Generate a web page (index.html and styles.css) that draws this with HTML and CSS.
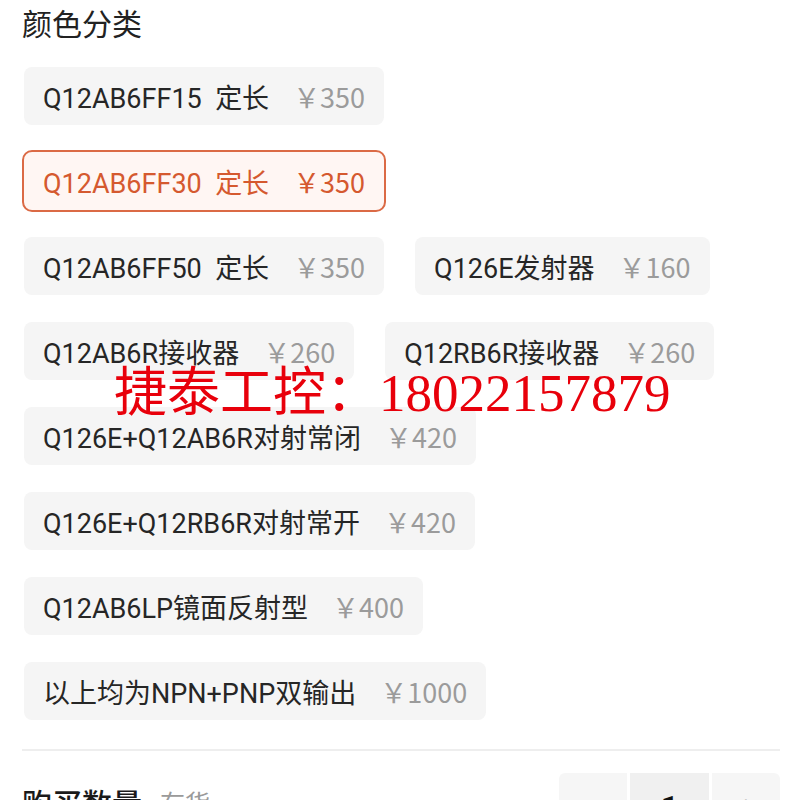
FILE: index.html
```html
<!DOCTYPE html>
<html lang="zh">
<head>
<meta charset="utf-8">
<link rel="stylesheet" href="styles.css">
</head>
<body>
<div class="page">
  <h2 class="title">颜色分类</h2>
  <div class="options">
    <div class="row">
      <div class="opt"><span class="name">Q12AB6FF15&nbsp;&nbsp;定长</span><span class="price">￥350</span></div>
    </div>
    <div class="row">
      <div class="opt selected"><span class="name">Q12AB6FF30&nbsp;&nbsp;定长</span><span class="price">￥350</span></div>
    </div>
    <div class="row">
      <div class="opt"><span class="name">Q12AB6FF50&nbsp;&nbsp;定长</span><span class="price">￥350</span></div>
      <div class="opt"><span class="name">Q126E发射器</span><span class="price">￥160</span></div>
    </div>
    <div class="row">
      <div class="opt"><span class="name">Q12AB6R接收器</span><span class="price">￥260</span></div>
      <div class="opt"><span class="name">Q12RB6R接收器</span><span class="price">￥260</span></div>
    </div>
    <div class="row">
      <div class="opt"><span class="name">Q126E+Q12AB6R对射常闭</span><span class="price">￥420</span></div>
    </div>
    <div class="row">
      <div class="opt"><span class="name">Q126E+Q12RB6R对射常开</span><span class="price">￥420</span></div>
    </div>
    <div class="row">
      <div class="opt"><span class="name">Q12AB6LP镜面反射型</span><span class="price">￥400</span></div>
    </div>
    <div class="row">
      <div class="opt"><span class="name">以上均为NPN+PNP双输出</span><span class="price">￥1000</span></div>
    </div>
  </div>
  <div class="divider"></div>
  <div class="qty-row">
    <div class="qty-label"><span class="label-text">购买数量</span><span class="stock">有货</span></div>
    <div class="stepper">
      <div class="step minus">−</div>
      <div class="step num">1</div>
      <div class="step plus">+</div>
    </div>
  </div>
  <div class="watermark">捷泰工控：18022157879</div>
</div>
</body>
</html>
```
FILE: styles.css
```css
html, body {
  margin: 0;
  padding: 0;
  background: #fff;
}
body {
  font-family: Roboto, "Noto Sans CJK SC", sans-serif;
  color: #222;
  overflow: hidden;
}
.page {
  position: relative;
  width: 800px;
  height: 800px;
  padding: 0 20px 0 22px;
  box-sizing: border-box;
}
.title {
  margin: 0;
  padding-top: 3px;
  font-size: 30px;
  font-weight: 400;
  line-height: 38px;
  font-family: "Noto Sans CJK SC", sans-serif;
  color: #222;
}
.options {
  display: flex;
  flex-direction: column;
  gap: 27px;
  margin-top: 26px;
  padding-left: 2px;
}
.row {
  display: flex;
  gap: 31px;
}
.opt {
  display: inline-flex;
  align-items: center;
  height: 58px;
  padding: 0 19px;
  background: #f5f5f5;
  border-radius: 8px;
  font-size: 27px;
  font-weight: 400;
  white-space: nowrap;
  color: #262626;
}
.opt .price {
  margin-left: 24px;
  color: #9b9b9b;
  font-family: "Noto Sans CJK SC", sans-serif;
  font-size: 27px;
}
.opt.selected {
  background: #fff6f3;
  color: #d5592f;
  outline: 2px solid #db6a45;
  outline-offset: 0;
}
.opt.selected .price {
  color: #d5592f;
}
.divider {
  height: 2px;
  background: #eeeeee;
  margin-top: 29px;
}
.qty-row {
  display: flex;
  justify-content: space-between;
  align-items: flex-start;
  margin-top: 22px;
}
.qty-label {
  display: flex;
  align-items: center;
  height: 58px;
  padding-top: 0;
  font-family: "Noto Sans CJK SC", sans-serif;
}
.label-text {
  font-size: 30px;
  font-weight: 500;
  color: #1a1a1a;
  line-height: 40px;
}
.stock {
  font-size: 25px;
  font-weight: 400;
  color: #9a9a9a;
  margin-left: 18px;
  line-height: 40px;
}
.stepper {
  display: flex;
  gap: 3px;
}
.step {
  height: 58px;
  display: flex;
  align-items: center;
  justify-content: center;
  background: #f6f6f6;
  color: #aaa;
  font-size: 30px;
  font-weight: 300;
  box-sizing: border-box;
}
.minus {
  width: 68px;
  border-radius: 6px 0 0 6px;
  color: #ccc;
  padding-top: 20px;
}
.num {
  width: 79px;
  background: #f0f0f0;
  color: #111;
  font-weight: 700;
  font-size: 30px;
  padding-top: 8px;
}
.plus {
  width: 68px;
  border-radius: 0 6px 6px 0;
  padding-top: 8px;
}
.watermark {
  position: absolute;
  left: 114px;
  top: 361px;
  font-family: "Liberation Serif", "Noto Sans CJK SC", serif;
  font-size: 53px;
  line-height: 64px;
  color: #e8000b;
  white-space: nowrap;
}
```
